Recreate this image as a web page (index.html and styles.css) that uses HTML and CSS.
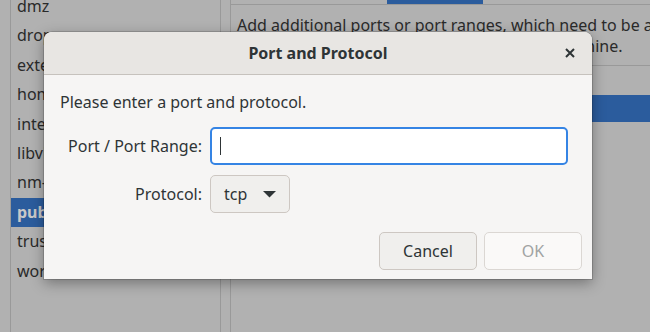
FILE: index.html
```html
<!DOCTYPE html>
<html lang="en">
<head>
    <meta charset="UTF-8">
    <title>Port and Protocol</title>
    <link rel="stylesheet" href="styles.css">
</head>
<body>
    <div class="window">
        <div class="edge"></div>
        <ul class="zones">
            <li>dmz</li>
            <li>drop</li>
            <li>external</li>
            <li>home</li>
            <li>internal</li>
            <li>libvirt</li>
            <li>nm-shared</li>
            <li class="selected">public</li>
            <li>trusted</li>
            <li>work</li>
        </ul>
        <div class="gap"></div>
        <div class="pane">
            <div class="tabs">
                <span class="tab"></span>
            </div>
            <p class="info">Add additional ports or port ranges, which need to be accessible for all<br>hosts or networks that can connect to the machine.</p>
            <div class="rows">
                <div class="row selected"></div>
            </div>
        </div>
    </div>

    <div class="dialog">
        <div class="header">
            <span class="title">Port and Protocol</span>
            <svg class="close" width="10" height="10" viewBox="0 0 10 10"><path d="M1 1L9 9M9 1L1 9" stroke="#2e3436" stroke-width="2"/></svg>
        </div>
        <div class="content">
            <p class="hint">Please enter a port and protocol.</p>
            <div class="form">
                <label>Port / Port Range:</label>
                <div class="entry"><span class="caret"></span></div>
                <label>Protocol:</label>
                <div class="combo">
                    <span>tcp</span>
                    <svg width="13" height="8" viewBox="0 0 13 8"><path d="M0 1h13L6.5 7.5z" fill="#2e3436"/></svg>
                </div>
            </div>
            <div class="buttons">
                <button class="btn">Cancel</button>
                <button class="btn disabled">OK</button>
            </div>
        </div>
    </div>
</body>
</html>
```

FILE: styles.css
```css
body {
    margin: 0;
    width: 650px;
    height: 332px;
    overflow: hidden;
    background-color: #b1b1b1;
    font-family: "Noto Sans", sans-serif;
    font-size: 16px;
    color: #2a2a2a;
}

.window {
    display: flex;
    height: 332px;
}

.edge {
    width: 10px;
    border-right: 1px solid #999999;
}

.zones {
    list-style: none;
    margin: 0;
    padding: 0;
    width: 209px;
    margin-top: -8px;
    border-right: 1px solid #999999;
}

.zones li {
    height: 29.4px;
    line-height: 29.4px;
    padding-left: 6px;
    white-space: nowrap;
    overflow: hidden;
}

.zones li.selected {
    background-color: #2b5c9d;
    color: #c8c8c8;
    font-weight: bold;
}

.gap {
    width: 9px;
    border-right: 1px solid #999999;
}

.pane {
    flex: 1;
    padding-left: 6px;
    overflow: hidden;
}

.tabs {
    height: 4px;
    border-bottom: 1px solid #999999;
    margin-left: -6px;
    padding-left: 156px;
}

.tab {
    display: block;
    width: 96px;
    height: 4px;
    background-color: #2b5c9d;
}

.info {
    margin: 0;
    padding: 10px 0 8px;
    line-height: 21px;
    white-space: nowrap;
}

.rows {
    border-top: 1px solid #999999;
    margin-left: -6px;
    padding-top: 29px;
}

.row {
    height: 27px;
}

.row.selected {
    background-color: #2b5c9d;
}

.dialog {
    position: absolute;
    left: 44px;
    top: 32px;
    width: 548px;
    height: 247px;
    background-color: #f6f5f4;
    border-radius: 8px 8px 0 0;
    box-shadow: 0 4px 14px rgba(0, 0, 0, 0.35), 0 0 0 1px rgba(0, 0, 0, 0.15);
    display: flex;
    flex-direction: column;
}

.header {
    height: 42px;
    background-color: #e8e6e3;
    border-bottom: 1px solid #c6c2bd;
    border-radius: 8px 8px 0 0;
    display: flex;
    align-items: center;
    justify-content: center;
    position: relative;
}

.title {
    font-weight: bold;
    color: #2e3436;
}

.close {
    position: absolute;
    right: 17px;
    top: 16px;
}

.content {
    flex: 1;
    padding: 16px 10px 9px 16px;
    display: flex;
    flex-direction: column;
}

.hint {
    margin: 0;
    color: #2e3436;
    line-height: 22px;
}

.form {
    display: grid;
    grid-template-columns: 142px 358px;
    column-gap: 8px;
    row-gap: 10px;
    align-items: center;
    margin-top: 14px;
}

.form label {
    text-align: right;
    color: #2e3436;
}

.entry {
    height: 34px;
    background-color: #ffffff;
    border: 2px solid #3584e4;
    border-radius: 5px;
    display: flex;
    align-items: center;
    padding-left: 8px;
}

.caret {
    width: 1px;
    height: 18px;
    background-color: #2e3436;
}

.combo {
    width: 80px;
    height: 38px;
    box-sizing: border-box;
    border: 1px solid #cdc7c2;
    border-radius: 5px;
    background-color: #f0efed;
    display: flex;
    align-items: center;
    justify-content: space-between;
    padding: 0 13px 0 13px;
    color: #2e3436;
    justify-self: start;
}

.buttons {
    margin-top: auto;
    display: flex;
    justify-content: flex-end;
    gap: 7px;
}

.btn {
    width: 98px;
    height: 38px;
    font-family: inherit;
    font-size: 16px;
    color: #2e3436;
    background-color: #f0efed;
    border: 1px solid #cdc7c2;
    border-radius: 5px;
}

.btn.disabled {
    background-color: #faf9f8;
    color: #a0a3a3;
    border-color: #dbd7d3;
}
```
